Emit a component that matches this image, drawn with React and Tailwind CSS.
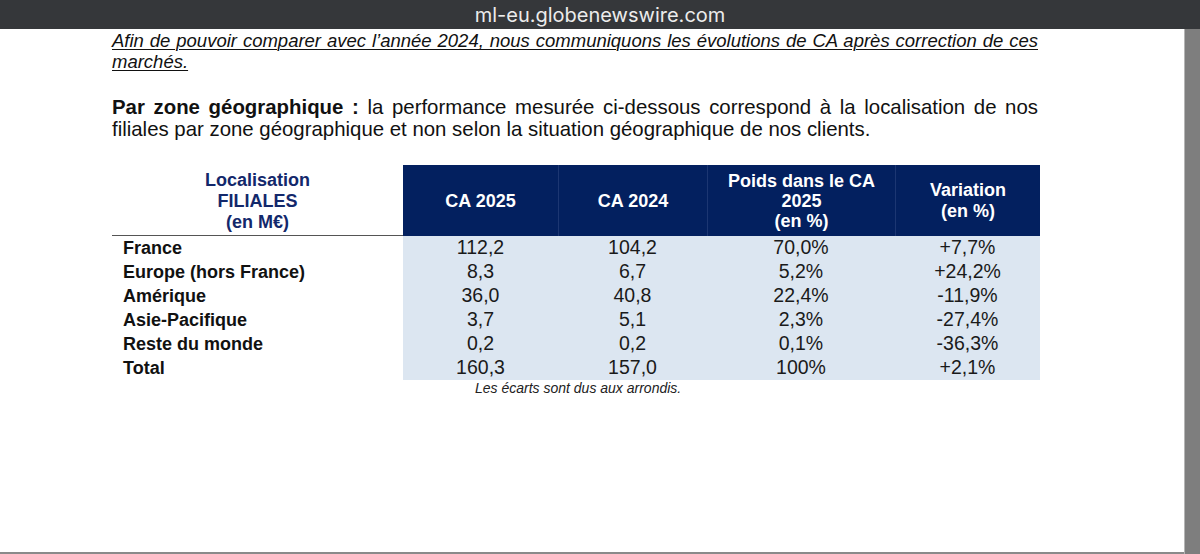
import React from "react";

const rows = [
  ["France", "112,2", "104,2", "70,0%", "+7,7%"],
  ["Europe (hors France)", "8,3", "6,7", "5,2%", "+24,2%"],
  ["Amérique", "36,0", "40,8", "22,4%", "-11,9%"],
  ["Asie-Pacifique", "3,7", "5,1", "2,3%", "-27,4%"],
  ["Reste du monde", "0,2", "0,2", "0,1%", "-36,3%"],
  ["Total", "160,3", "157,0", "100%", "+2,1%"],
];

export default function App() {
  return (
    <div className="w-[1200px] h-[554px] overflow-hidden flex flex-col bg-white" style={{ fontFamily: '"Liberation Sans", Arial, sans-serif' }}>
      <div className="h-[29px] shrink-0 bg-[#35373a] flex items-center justify-center">
        <span className="text-[20px] text-[#ececec] leading-none" style={{ fontFamily: 'Inter, "Liberation Sans", sans-serif' }}>
          ml-eu.globenewswire.com
        </span>
      </div>
      <div className="flex-1 flex min-h-0">
        <div className="flex-1 bg-white border-b-2 border-[#8a8a8a]">
          <div className="ml-[112px] w-[926px] pt-[1px] text-black">
            <p className="italic underline text-[18.5px] leading-[21px] text-justify [text-align-last:left] decoration-1 underline-offset-2 text-[#111]">
              Afin de pouvoir comparer avec l’année 2024, nous communiquons les évolutions de CA après correction de ces marchés.
            </p>
            <p className="mt-[24px] text-[20.4px] leading-[22px] text-justify text-[#111]">
              <span className="font-bold">Par zone géographique :</span> la performance mesurée ci-dessous correspond à la localisation de nos filiales par zone géographique et non selon la situation géographique de nos clients.
            </p>

            <div className="mt-[25px] grid grid-cols-[291px_155px_149px_188px_145px] w-[928px]">
              <div className="h-[71px] flex items-end justify-center pb-[2px] border-b border-[#555] text-center font-bold text-[18px] leading-[21px] text-[#13286b]">
                <div>
                  Localisation
                  <br />
                  FILIALES
                  <br />
                  (en M€)
                </div>
              </div>
              <div className="h-[71px] bg-[#03205f] flex items-center justify-center text-white font-bold text-[18px] leading-[20px] text-center">
                CA 2025
              </div>
              <div className="h-[71px] bg-[#03205f] border-l border-[#1c3672] flex items-center justify-center text-white font-bold text-[18px] leading-[20px] text-center">
                CA 2024
              </div>
              <div className="h-[71px] bg-[#03205f] border-l border-[#1c3672] flex items-center justify-center text-white font-bold text-[18px] leading-[20px] text-center">
                <div>
                  Poids dans le CA
                  <br />
                  2025
                  <br />
                  (en %)
                </div>
              </div>
              <div className="h-[71px] bg-[#03205f] border-l border-[#1c3672] flex items-center justify-center text-white font-bold text-[18px] leading-[21px] text-center">
                <div>
                  Variation
                  <br />
                  (en %)
                </div>
              </div>

              {rows.map((r) => (
                <React.Fragment key={r[0]}>
                  <div className="h-[24px] flex items-center pl-[11px] font-bold text-[18px] text-[#111] leading-none">
                    {r[0]}
                  </div>
                  {r.slice(1).map((v, i) => (
                    <div key={i} className="h-[24px] bg-[#dce6f1] flex items-center justify-center text-[19.5px] text-[#1a1a1a] leading-none">
                      {v}
                    </div>
                  ))}
                </React.Fragment>
              ))}
            </div>
            <div className="ml-[363px] italic text-[14px] leading-[16px] text-[#222]">
              Les écarts sont dus aux arrondis.
            </div>
          </div>
        </div>
        <div className="w-[16px] shrink-0 bg-[#7e7e7e] border-l border-[#b5b5b5]"></div>
      </div>
    </div>
  );
}
